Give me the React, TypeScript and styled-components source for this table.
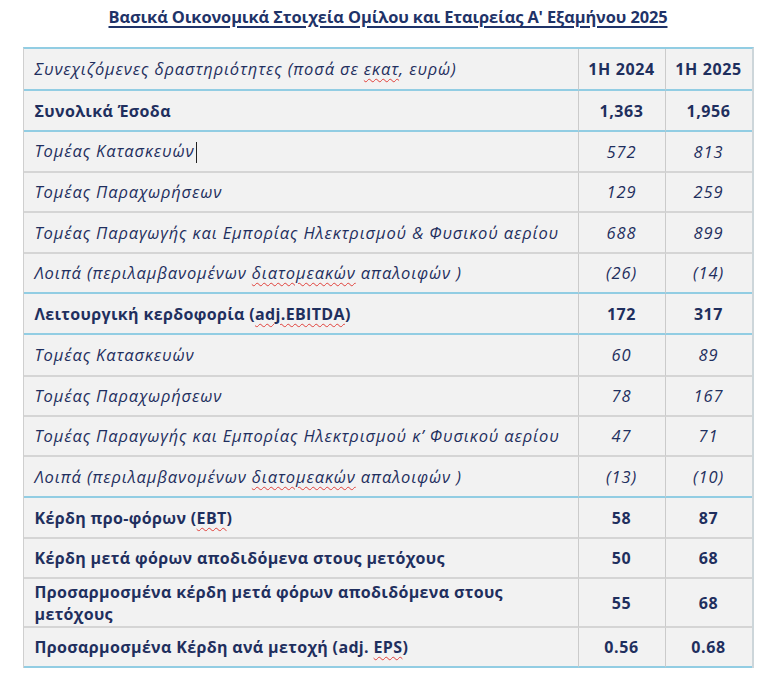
import React from "react";
import styled, { createGlobalStyle } from "styled-components";

const Global = createGlobalStyle`
  html, body { margin: 0; padding: 0; background: #ffffff; }
  body { font-family: "Open Sans", "Noto Sans", sans-serif; color: #1f3060; }
`;

const Page = styled.div`
  width: 766px;
  height: 675px;
  display: flex;
  flex-direction: column;
  align-items: center;
  background: #ffffff;
`;

const Title = styled.h1`
  margin: 5px 0 0 10px;
  height: 42px;
  font-size: 16.4px;
  font-weight: 700;
  color: #1f3368;
  text-decoration: underline;
  text-decoration-thickness: 1.5px;
  text-underline-offset: 3px;
  letter-spacing: -0.1px;
`;

const Table = styled.div`
  width: 728px;
  margin-left: 10px;
  display: grid;
  grid-template-columns: 555px 87px 86px;
  background: #f2f2f2;
  border-top: 2px solid #92cde3;
  border-left: 1px solid #cfcfcf;
  border-right: 2px solid #cdd6da;
`;

const Cell = styled.div<{ $h: number; $line: "blue" | "gray"; $num?: boolean; $bold?: boolean; $italic?: boolean; $last?: boolean }>`
  height: ${(p) => p.$h}px;
  box-sizing: border-box;
  display: flex;
  align-items: center;
  justify-content: ${(p) => (p.$num ? "center" : "flex-start")};
  padding: ${(p) => (p.$num ? "0" : "0 0 0 11px")};
  border-bottom: 2px solid ${(p) => (p.$line === "blue" ? "#92cde3" : "#d5d5d5")};
  border-right: ${(p) => (p.$last ? "none" : "1.5px solid #cbcbcb")};
  font-size: ${(p) => (p.$bold ? "16px" : "16.5px")};
  font-weight: ${(p) => (p.$bold ? 700 : 400)};
  font-style: ${(p) => (p.$italic ? "italic" : "normal")};
  color: #1f2f5e;
  line-height: 22px;
  letter-spacing: ${(p) => (p.$bold ? (p.$num ? "0.6px" : "0.35px") : "0.85px")};
`;

const Label = styled.span`
  white-space: pre-line;
`;

const Spell = styled.span`
  text-decoration: underline wavy #e0403a;
  text-decoration-thickness: 1px;
  text-underline-offset: 3px;
`;

const Caret = styled.span`
  display: inline-block;
  width: 1px;
  height: 21px;
  background: #222;
  margin-left: 2px;
  vertical-align: middle;
`;

type Row = {
  label: React.ReactNode;
  a: string;
  b: string;
  bold?: boolean;
  italic?: boolean;
  line: "blue" | "gray";
  h?: number;
};

const rows: Row[] = [
  {
    label: (
      <>
        Συνεχιζόμενες δραστηριότητες (ποσά σε <Spell>εκατ</Spell>, ευρώ)
      </>
    ),
    a: "1H 2024",
    b: "1H 2025",
    italic: true,
    line: "blue",
    h: 42,
  },
  { label: "Συνολικά Έσοδα", a: "1,363", b: "1,956", bold: true, line: "blue" },
  {
    label: (
      <>
        Τομέας Κατασκευών<Caret />
      </>
    ),
    a: "572",
    b: "813",
    italic: true,
    line: "gray",
  },
  { label: "Τομέας Παραχωρήσεων", a: "129", b: "259", italic: true, line: "gray", h: 40 },
  {
    label: "Τομέας Παραγωγής και Εμπορίας Ηλεκτρισμού & Φυσικού αερίου",
    a: "688",
    b: "899",
    italic: true,
    line: "gray",
  },
  {
    label: (
      <>
        Λοιπά (περιλαμβανομένων <Spell>διατομεακών</Spell> απαλοιφών )
      </>
    ),
    a: "(26)",
    b: "(14)",
    italic: true,
    line: "blue",
    h: 40,
  },
  {
    label: (
      <>
        Λειτουργική κερδοφορία (<Spell>adj.EBITDA</Spell>)
      </>
    ),
    a: "172",
    b: "317",
    bold: true,
    line: "blue",
  },
  { label: "Τομέας Κατασκευών", a: "60", b: "89", italic: true, line: "gray", h: 42 },
  { label: "Τομέας Παραχωρήσεων", a: "78", b: "167", italic: true, line: "gray", h: 40 },
  {
    label: "Τομέας Παραγωγής και Εμπορίας Ηλεκτρισμού κ’ Φυσικού αερίου",
    a: "47",
    b: "71",
    italic: true,
    line: "gray",
    h: 40,
  },
  {
    label: (
      <>
        Λοιπά (περιλαμβανομένων <Spell>διατομεακών</Spell> απαλοιφών )
      </>
    ),
    a: "(13)",
    b: "(10)",
    italic: true,
    line: "blue",
  },
  {
    label: (
      <>
        Κέρδη προ-φόρων (<Spell>EBT</Spell>)
      </>
    ),
    a: "58",
    b: "87",
    bold: true,
    line: "gray",
  },
  {
    label: "Κέρδη μετά φόρων αποδιδόμενα στους μετόχους",
    a: "50",
    b: "68",
    bold: true,
    line: "gray",
    h: 40,
  },
  {
    label: "Προσαρμοσμένα κέρδη μετά φόρων αποδιδόμενα στους\nμετόχους",
    a: "55",
    b: "68",
    bold: true,
    line: "gray",
    h: 49,
  },
  {
    label: (
      <>
        Προσαρμοσμένα Κέρδη ανά μετοχή (adj. <Spell>EPS</Spell>)
      </>
    ),
    a: "0.56",
    b: "0.68",
    bold: true,
    line: "blue",
    h: 40,
  },
];

export default function App() {
  return (
    <>
      <Global />
      <Page>
        <Title>Βασικά Οικονομικά Στοιχεία Ομίλου και Εταιρείας Α' Εξαμήνου 2025</Title>
        <Table>
          {rows.map((r, i) => {
            const h = r.h ?? 41;
            const head = i === 0;
            return (
              <React.Fragment key={i}>
                <Cell $h={h} $line={r.line} $bold={r.bold} $italic={r.italic}>
                  <Label>{r.label}</Label>
                </Cell>
                <Cell $h={h} $line={r.line} $num $bold={r.bold || head} $italic={r.italic && !head}>
                  {r.a}
                </Cell>
                <Cell $h={h} $line={r.line} $num $last $bold={r.bold || head} $italic={r.italic && !head}>
                  {r.b}
                </Cell>
              </React.Fragment>
            );
          })}
        </Table>
      </Page>
    </>
  );
}
